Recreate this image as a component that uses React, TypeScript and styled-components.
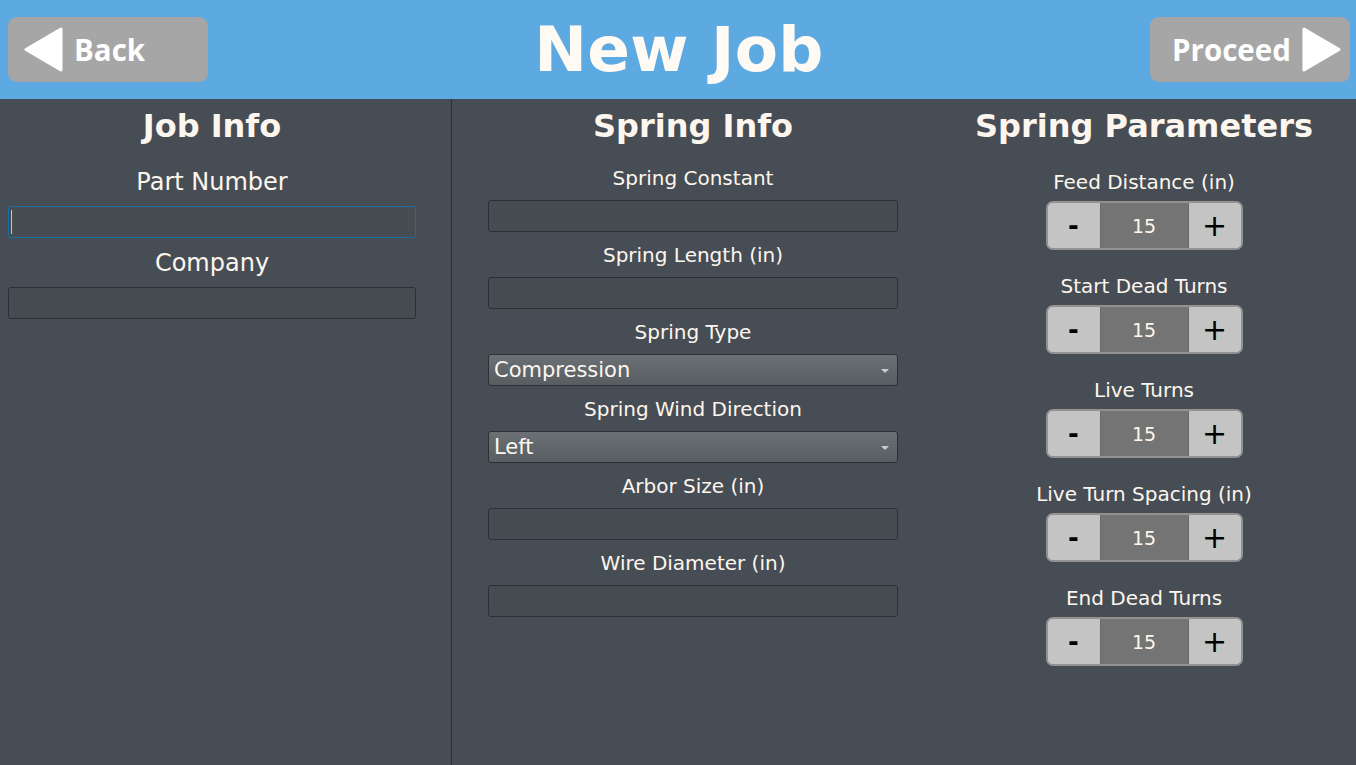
import React from "react";
import styled, { createGlobalStyle } from "styled-components";

const Global = createGlobalStyle`
  html, body { margin: 0; padding: 0; background: #474d54; }
  body { font-family: "DejaVu Sans", sans-serif; color: #fdf6ee; }
  * { box-sizing: border-box; }
`;

const Page = styled.div`
  width: 1356px;
  height: 765px;
  display: flex;
  flex-direction: column;
  background: #474d54;
  overflow: hidden;
`;

const Header = styled.header`
  height: 99px;
  flex: none;
  background: #5daae2;
  display: flex;
  align-items: center;
  justify-content: space-between;
  padding: 0 6px 0 8px;
`;

const NavButton = styled.button<{ $dir: "left" | "right" }>`
  width: 200px;
  height: 65px;
  border: none;
  border-radius: 9px;
  background: #a6a6a6;
  color: #ffffff;
  display: flex;
  align-items: center;
  gap: 10px;
  padding: ${(p) => (p.$dir === "left" ? "0 0 0 16px" : "0 0 0 22px")};
  font-family: "Open Sans", "Noto Sans", sans-serif;
  font-weight: 700;
  font-size: 29.5px;
  cursor: pointer;
`;

const Title = styled.h1`
  margin: 0;
  font-family: "DejaVu Sans", sans-serif;
  font-weight: 700;
  font-size: 63px;
  color: #fffaf4;
  letter-spacing: 0.3px;
`;

const Body = styled.main`
  flex: 1;
  display: grid;
  grid-template-columns: 451px 1px 480px 1fr;
`;

const Divider = styled.div`
  background: #2d3136;
`;

const Column = styled.section<{ $pl: number; $pr: number }>`
  display: flex;
  flex-direction: column;
  align-items: stretch;
  padding: 8px ${(p) => p.$pr}px 0 ${(p) => p.$pl}px;
`;

const Heading = styled.h2<{ $mb: number }>`
  margin: 0 0 ${(p) => p.$mb}px;
  text-align: center;
  font-size: 32px;
  font-weight: 700;
  color: #fdf6ee;
`;

const Label = styled.div<{ $size: number; $mb: number }>`
  text-align: center;
  font-size: ${(p) => p.$size}px;
  margin-bottom: ${(p) => p.$mb}px;
  color: #fdf6ee;
`;

const FieldWrap = styled.div<{ $mb: number }>`
  position: relative;
  margin-bottom: ${(p) => p.$mb}px;
`;

const TextInput = styled.input<{ $focused?: boolean }>`
  display: block;
  width: 100%;
  height: 32px;
  margin: 0;
  background: #474c53;
  border: 1px solid ${(p) => (p.$focused ? "#1c6ca6" : "#2c3035")};
  border-radius: 3px;
  outline: none;
  color: #fdf6ee;
  font-family: "DejaVu Sans", sans-serif;
  font-size: 18px;
  padding: 0 6px;
`;

const Caret = styled.span`
  position: absolute;
  left: 3px;
  top: 4px;
  width: 1px;
  height: 24px;
  background: #c8c8c8;
`;

const Select = styled.div`
  height: 32px;
  display: flex;
  align-items: center;
  justify-content: space-between;
  padding: 0 8px 0 5px;
  border: 1px solid #2c3035;
  border-radius: 3px;
  background: linear-gradient(#6b7075, #585d62);
  font-size: 21px;
  color: #fdf6ee;
`;

const Arrow = styled.span`
  width: 0;
  height: 0;
  border-left: 4px solid transparent;
  border-right: 4px solid transparent;
  border-top: 4px solid #c9cbcd;
  margin-top: 2px;
`;

const StepperGroup = styled.div<{ $mb: number }>`
  display: flex;
  flex-direction: column;
  align-items: center;
  margin-bottom: ${(p) => p.$mb}px;
`;

const Stepper = styled.div`
  width: 197px;
  height: 49px;
  display: grid;
  grid-template-columns: 52px 1fr 52px;
  border: 2px solid #929292;
  border-radius: 7px;
  overflow: hidden;
  background: #c4c4c4;
`;

const StepButton = styled.button<{ $size: number; $weight: number }>`
  border: none;
  margin: 0;
  padding: 0;
  background: #c4c4c4;
  color: #000;
  font-family: "DejaVu Sans", sans-serif;
  font-weight: ${(p) => p.$weight};
  font-size: ${(p) => p.$size}px;
  display: flex;
  align-items: center;
  justify-content: center;
  cursor: pointer;
`;

const StepValue = styled.div`
  background: #747474;
  border-left: 1px solid #6a6a6a;
  border-right: 1px solid #6a6a6a;
  display: flex;
  align-items: center;
  justify-content: center;
  font-size: 19px;
  color: #fdf6ee;
`;

const Tri = ({ dir }: { dir: "left" | "right" }) => (
  <svg width="40" height="46" viewBox="0 0 40 46">
    {dir === "left" ? (
      <polygon points="2,22.5 37,2 37,43" fill="#fff" stroke="#fff" strokeWidth="3" strokeLinejoin="round" />
    ) : (
      <polygon points="38,22.5 3,2 3,43" fill="#fff" stroke="#fff" strokeWidth="3" strokeLinejoin="round" />
    )}
  </svg>
);

const params = [
  "Feed Distance (in)",
  "Start Dead Turns",
  "Live Turns",
  "Live Turn Spacing (in)",
  "End Dead Turns",
];

export default function App() {
  return (
    <Page>
      <Global />
      <Header>
        <NavButton $dir="left">
          <Tri dir="left" />
          Back
        </NavButton>
        <Title>New Job</Title>
        <NavButton $dir="right">
          Proceed
          <Tri dir="right" />
        </NavButton>
      </Header>
      <Body>
        <Column $pl={8} $pr={35}>
          <Heading $mb={23}>Job Info</Heading>
          <Label $size={24} $mb={10}>Part Number</Label>
          <FieldWrap $mb={11}>
            <TextInput $focused readOnly />
            <Caret />
          </FieldWrap>
          <Label $size={24} $mb={10}>Company</Label>
          <FieldWrap $mb={0}>
            <TextInput readOnly />
          </FieldWrap>
        </Column>
        <Divider />
        <Column $pl={36} $pr={34}>
          <Heading $mb={21}>Spring Info</Heading>
          <Label $size={20} $mb={10}>Spring Constant</Label>
          <FieldWrap $mb={11.1}>
            <TextInput readOnly />
          </FieldWrap>
          <Label $size={20} $mb={10}>Spring Length (in)</Label>
          <FieldWrap $mb={11.1}>
            <TextInput readOnly />
          </FieldWrap>
          <Label $size={20} $mb={10}>Spring Type</Label>
          <FieldWrap $mb={11.1}>
            <Select>
              Compression
              <Arrow />
            </Select>
          </FieldWrap>
          <Label $size={20} $mb={10}>Spring Wind Direction</Label>
          <FieldWrap $mb={11.1}>
            <Select>
              Left
              <Arrow />
            </Select>
          </FieldWrap>
          <Label $size={20} $mb={10}>Arbor Size (in)</Label>
          <FieldWrap $mb={11.1}>
            <TextInput readOnly />
          </FieldWrap>
          <Label $size={20} $mb={10}>Wire Diameter (in)</Label>
          <FieldWrap $mb={0}>
            <TextInput readOnly />
          </FieldWrap>
        </Column>
        <Column $pl={0} $pr={0}>
          <Heading $mb={25}>Spring Parameters</Heading>
          {params.map((p) => (
            <StepperGroup key={p} $mb={24}>
              <Label $size={20} $mb={7}>{p}</Label>
              <Stepper>
                <StepButton $size={26} $weight={700}>-</StepButton>
                <StepValue>15</StepValue>
                <StepButton $size={30} $weight={400}>+</StepButton>
              </Stepper>
            </StepperGroup>
          ))}
        </Column>
      </Body>
    </Page>
  );
}
